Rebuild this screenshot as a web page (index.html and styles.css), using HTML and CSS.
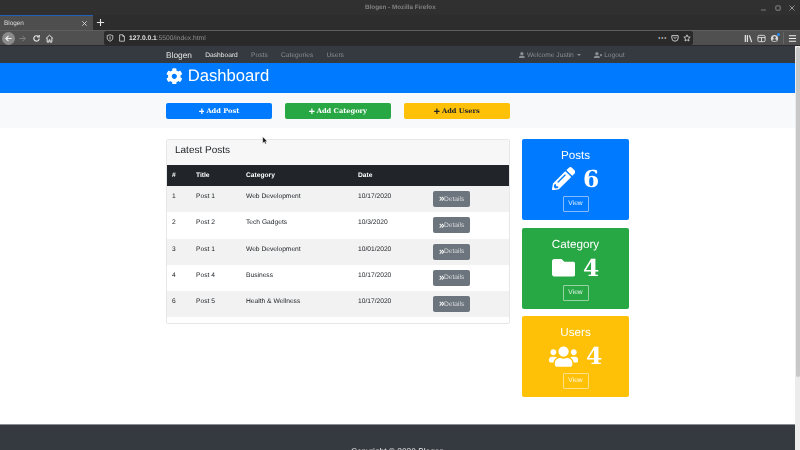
FILE: index.html
```html
<!DOCTYPE html>
<html lang="en">
<head>
<meta charset="utf-8">
<title>Blogen</title>
<link rel="stylesheet" href="styles.css">
</head>
<body>
<svg class="defs" aria-hidden="true">
  <symbol id="i-cog" viewBox="0 0 512 512"><path d="M487.4 315.7l-42.6-24.6c4.3-23.2 4.3-47 0-70.2l42.6-24.6c4.9-2.8 7.1-8.6 5.5-14-11.1-35.6-30-67.8-54.7-94.6-3.8-4.1-10-5.1-14.8-2.3L380.8 110c-17.9-15.4-38.5-27.3-60.8-35.1V25.8c0-5.6-3.9-10.5-9.4-11.7-36.7-8.2-74.3-7.8-109.2 0-5.5 1.2-9.4 6.1-9.4 11.7V75c-22.2 7.9-42.8 19.8-60.8 35.1L88.7 85.5c-4.9-2.8-11-1.9-14.8 2.3-24.7 26.7-43.6 58.9-54.7 94.6-1.7 5.4.6 11.2 5.5 14L67.3 221c-4.3 23.2-4.3 47 0 70.2l-42.6 24.6c-4.9 2.8-7.1 8.6-5.5 14 11.1 35.6 30 67.8 54.7 94.6 3.8 4.1 10 5.1 14.8 2.3l42.6-24.6c17.9 15.4 38.5 27.3 60.8 35.1v49.2c0 5.6 3.9 10.5 9.4 11.7 36.7 8.2 74.3 7.8 109.2 0 5.5-1.2 9.4-6.1 9.4-11.7v-49.2c22.2-7.9 42.8-19.8 60.8-35.1l42.6 24.6c4.9 2.8 11 1.9 14.8-2.3 24.7-26.7 43.6-58.9 54.7-94.6 1.5-5.5-.7-11.3-5.6-14.1zM256 336c-44.1 0-80-35.9-80-80s35.9-80 80-80 80 35.9 80 80-35.9 80-80 80z"/></symbol>
  <symbol id="i-pencil" viewBox="0 0 512 512"><path d="M497.9 142.1l-46.1 46.1c-4.7 4.7-12.3 4.7-17 0l-111-111c-4.7-4.7-4.7-12.3 0-17l46.1-46.1c18.7-18.7 49.1-18.7 67.9 0l60.1 60.1c18.8 18.7 18.8 49.1 0 67.9zM284.2 99.8L21.6 362.4.4 483.9c-2.9 16.4 11.4 30.6 27.8 27.8l121.5-21.3 262.6-262.6c4.7-4.7 4.7-12.3 0-17l-111-111c-4.8-4.7-12.4-4.7-17.1 0zM124.1 339.9c-5.5-5.5-5.5-14.3 0-19.8l154-154c5.5-5.5 14.3-5.5 19.8 0s5.5 14.3 0 19.8l-154 154c-5.5 5.5-14.3 5.5-19.8 0zM88 424h48v36.3l-64.5 11.3-31.1-31.1L51.7 376H88v48z"/></symbol>
  <symbol id="i-folder" viewBox="0 0 512 512"><path d="M464 128H272l-64-64H48C21.49 64 0 85.49 0 112v288c0 26.51 21.49 48 48 48h416c26.51 0 48-21.49 48-48V176c0-26.51-21.49-48-48-48z"/></symbol>
  <symbol id="i-users" viewBox="0 0 640 512"><path d="M96 224c35.3 0 64-28.7 64-64s-28.7-64-64-64-64 28.7-64 64 28.7 64 64 64zm448 0c35.3 0 64-28.7 64-64s-28.7-64-64-64-64 28.7-64 64 28.7 64 64 64zm32 32h-64c-17.6 0-33.5 7.1-45.1 18.6 40.3 22.1 68.9 62 75.1 109.4h66c17.7 0 32-14.3 32-32v-32c0-35.3-28.7-64-64-64zm-256 0c61.9 0 112-50.1 112-112S381.9 32 320 32 208 82.1 208 144s50.1 112 112 112zm76.8 32h-8.3c-20.8 10-43.9 16-68.5 16s-47.6-6-68.5-16h-8.3C179.6 288 128 339.6 128 403.2V432c0 26.5 21.5 48 48 48h288c26.5 0 48-21.5 48-48v-28.8c0-63.6-51.6-115.2-115.2-115.2zm-223.7-13.4C161.5 263.1 145.6 256 128 256H64c-35.3 0-64 28.7-64 64v32c0 17.7 14.3 32 32 32h65.9c6.3-47.4 34.9-87.3 75.2-109.4z"/></symbol>
  <symbol id="i-plus" viewBox="0 0 448 512"><path d="M416 208H272V64c0-17.67-14.33-32-32-32h-32c-17.67 0-32 14.33-32 32v144H32c-17.67 0-32 14.33-32 32v32c0 17.67 14.33 32 32 32h144v144c0 17.67 14.33 32 32 32h32c17.67 0 32-14.33 32-32V304h144c17.67 0 32-14.33 32-32v-32c0-17.67-14.33-32-32-32z"/></symbol>
  <symbol id="i-user" viewBox="0 0 448 512"><path d="M224 256c70.7 0 128-57.3 128-128S294.7 0 224 0 96 57.3 96 128s57.3 128 128 128zm89.6 32h-16.7c-22.2 10.2-46.9 16-72.9 16s-50.6-5.8-72.9-16h-16.7C60.2 288 0 348.2 0 422.4V464c0 26.5 21.5 48 48 48h352c26.5 0 48-21.5 48-48v-41.6c0-74.2-60.2-134.4-134.4-134.4z"/></symbol>
  <symbol id="i-logout" viewBox="0 0 640 512"><path d="M589.6 240l45.6-45.6c6.3-6.3 6.3-16.5 0-22.8l-22.8-22.8c-6.3-6.3-16.5-6.3-22.8 0L544 194.4l-45.6-45.6c-6.3-6.3-16.5-6.3-22.8 0l-22.8 22.8c-6.3 6.3-6.3 16.5 0 22.8l45.6 45.6-45.6 45.6c-6.3 6.3-6.3 16.5 0 22.8l22.8 22.8c6.3 6.3 16.5 6.3 22.8 0l45.6-45.6 45.6 45.6c6.3 6.3 16.5 6.3 22.8 0l22.8-22.8c6.3-6.3 6.3-16.5 0-22.8L589.6 240zM224 256c70.7 0 128-57.3 128-128S294.7 0 224 0 96 57.3 96 128s57.3 128 128 128zm89.6 32h-16.7c-22.2 10.2-46.9 16-72.9 16s-50.6-5.8-72.9-16h-16.7C60.2 288 0 348.2 0 422.4V464c0 26.5 21.5 48 48 48h352c26.5 0 48-21.5 48-48v-41.6c0-74.2-60.2-134.4-134.4-134.4z"/></symbol>
  <symbol id="i-dbl" viewBox="0 0 12 12"><path d="M1.5 2l4 4-4 4M6.5 2l4 4-4 4" fill="none" stroke="currentColor" stroke-width="2.2"/></symbol>
</svg>

<div class="window">
  <header class="titlebar">
    <span class="win-title">Blogen - Mozilla Firefox</span>
    <div class="win-controls">
      <svg class="win-ctl" viewBox="0 0 8 8"><path d="M1 6h5" stroke="#7a7a7a" fill="none"/></svg>
      <svg class="win-ctl" viewBox="0 0 8 8"><circle cx="4" cy="4" r="2.4" stroke="#6e6e6e" stroke-width="1.4" fill="none"/></svg>
      <svg class="win-ctl" viewBox="0 0 8 8"><path d="M1.5 1.5l5 5M6.5 1.5l-5 5" stroke="#8e8e8e" fill="none"/></svg>
    </div>
  </header>
  <div class="tabbar">
    <div class="tab"><span class="tab-name">Blogen</span>
      <svg class="tab-x" viewBox="0 0 8 8"><path d="M1.5 1.5l5 5M6.5 1.5l-5 5" stroke="#d8d8d8" fill="none"/></svg>
    </div>
    <svg class="new-tab" viewBox="0 0 10 10"><path d="M5 1v8M1 5h8" stroke="#e8e8e8" stroke-width="1.2" fill="none"/></svg>
  </div>
  <div class="toolbar">
    <span class="back"><svg viewBox="0 0 10 10"><path d="M8.5 5H2M5 2L2 5l3 3" stroke="#f0f0f0" stroke-width="1.2" fill="none"/></svg></span>
    <svg class="tool" viewBox="0 0 10 10"><path d="M1.5 5H8M5 2l3 3-3 3" stroke="#808080" stroke-width="1.1" fill="none"/></svg>
    <svg class="tool" viewBox="0 0 10 10"><path d="M8 5a3 3 0 1 1-1-2.3M8 1v2.3H5.7" stroke="#e8e8e8" stroke-width="1.3" fill="none"/></svg>
    <svg class="tool" viewBox="0 0 10 10"><path d="M1 5l4-3.6L9 5M2.4 4.6V9h2V6.5h1.2V9h2V4.6" stroke="#e8e8e8" stroke-width="1.1" fill="none"/></svg>
    <div class="urlbar">
      <svg class="url-ico" viewBox="0 0 10 10"><path d="M5 1l3.5 1v3c0 2-1.5 3.2-3.5 4C3 8.2 1.5 7 1.5 5V2zM5 3v4" stroke="#c8c8c8" stroke-width="1.1" fill="none"/></svg>
      <svg class="url-ico" viewBox="0 0 10 10"><path d="M2 1h4l2 2v6H2zM6 1v2h2" stroke="#d8d8d8" fill="none"/></svg>
      <span class="url"><b>127.0.0.1</b>:5500/index.html</span>
      <span class="url-dots">···</span>
      <svg class="url-ico" viewBox="0 0 10 10"><path d="M1 2h8v3a4 4 0 0 1-8 0zM3 4l2 1.5L7 4" stroke="#d8d8d8" stroke-width="1.1" fill="none"/></svg>
      <svg class="url-ico" viewBox="0 0 10 10"><path d="M5 1l1.2 2.7 2.8.3-2.1 1.9.6 2.9L5 7.3 2.5 8.8l.6-2.9L1 4l2.8-.3z" stroke="#e0e0e0" fill="none"/></svg>
    </div>
    <div class="tool-right">
      <svg class="tool" viewBox="0 0 10 10"><path d="M1.5 1v8M3.8 1v8M6 1.5l2.5 7.5" stroke="#e0e0e0" stroke-width="1.4" fill="none"/></svg>
      <svg class="tool" viewBox="0 0 10 10"><rect x="1" y="1.5" width="8" height="7" rx="1.5" stroke="#e0e0e0" fill="none"/><path d="M1 4h8M5 4v4.5" stroke="#e0e0e0" fill="none"/></svg>
      <span class="account"><svg class="tool" viewBox="0 0 10 10"><circle cx="5" cy="5" r="4" fill="#d8d8d8"/><circle cx="5" cy="4" r="1.5" fill="#555"/><path d="M2.5 8a2.5 2.5 0 0 1 5 0" fill="#555"/></svg><i class="badge"></i></span>
      <span class="tool-sep"></span>
      <svg class="tool" viewBox="0 0 10 10"><path d="M1 2h8M1 5h8M1 8h8" stroke="#f0f0f0" stroke-width="1.2" fill="none"/></svg>
    </div>
  </div>

  <div class="viewport">
    <div class="page">
      <nav class="navbar">
        <div class="container nav-inner">
          <span class="brand">Blogen</span>
          <a class="nav-link active">Dashboard</a>
          <a class="nav-link">Posts</a>
          <a class="nav-link">Categories</a>
          <a class="nav-link">Users</a>
          <a class="nav-link push"><svg class="nav-ico"><use href="#i-user"/></svg>Welcome Justin<i class="caret"></i></a>
          <a class="nav-link logout"><svg class="nav-ico wide"><use href="#i-logout"/></svg>Logout</a>
        </div>
      </nav>
      <section class="hero">
        <div class="container">
          <h1 class="hero-title"><svg class="hero-ico"><use href="#i-cog"/></svg>Dashboard</h1>
        </div>
      </section>
      <section class="actions">
        <div class="container actions-inner">
          <button class="act act-blue"><svg class="act-ico"><use href="#i-plus"/></svg>Add Post</button>
          <button class="act act-green"><svg class="act-ico"><use href="#i-plus"/></svg>Add Category</button>
          <button class="act act-yellow"><svg class="act-ico"><use href="#i-plus"/></svg>Add Users</button>
        </div>
      </section>
      <main class="container main">
        <section class="card">
          <h2 class="card-head">Latest Posts</h2>
          <table class="table">
            <thead>
              <tr><th>#</th><th>Title</th><th>Category</th><th>Date</th><th></th></tr>
            </thead>
            <tbody>
              <tr><td>1</td><td>Post 1</td><td>Web Development</td><td>10/17/2020</td><td><button class="details"><svg class="dbl"><use href="#i-dbl"/></svg>Details</button></td></tr>
              <tr><td>2</td><td>Post 2</td><td>Tech Gadgets</td><td>10/3/2020</td><td><button class="details"><svg class="dbl"><use href="#i-dbl"/></svg>Details</button></td></tr>
              <tr><td>3</td><td>Post 1</td><td>Web Development</td><td>10/01/2020</td><td><button class="details"><svg class="dbl"><use href="#i-dbl"/></svg>Details</button></td></tr>
              <tr><td>4</td><td>Post 4</td><td>Business</td><td>10/17/2020</td><td><button class="details"><svg class="dbl"><use href="#i-dbl"/></svg>Details</button></td></tr>
              <tr><td>6</td><td>Post 5</td><td>Health &amp; Wellness</td><td>10/17/2020</td><td><button class="details"><svg class="dbl"><use href="#i-dbl"/></svg>Details</button></td></tr>
            </tbody>
          </table>
        </section>
        <aside class="stats">
          <div class="stat stat-blue">
            <h3 class="stat-title">Posts</h3>
            <div class="stat-value"><svg class="stat-ico"><use href="#i-pencil"/></svg>6</div>
            <a class="view">View</a>
          </div>
          <div class="stat stat-green">
            <h3 class="stat-title">Category</h3>
            <div class="stat-value"><svg class="stat-ico"><use href="#i-folder"/></svg>4</div>
            <a class="view">View</a>
          </div>
          <div class="stat stat-yellow">
            <h3 class="stat-title">Users</h3>
            <div class="stat-value"><svg class="stat-ico users"><use href="#i-users"/></svg>4</div>
            <a class="view">View</a>
          </div>
        </aside>
      </main>
      <footer class="footer">Copyright © 2020 Blogen</footer>
    </div>
    <div class="scrollbar"><span class="thumb"></span></div>
  </div>
</div>

<svg class="cursor" viewBox="0 0 8 12"><path d="M1 1v8.5l2-1.8 1.3 3 1.4-.6-1.3-2.900H7z" fill="#111" stroke="#fff" stroke-width=".5"/></svg>
</body>
</html>
```

FILE: styles.css
```css
* { box-sizing: border-box; }
html, body { margin: 0; padding: 0; height: 100%; overflow: hidden; }
body { font-family: "Liberation Sans", Arial, sans-serif; background: #fff; color: #212529; position: relative; text-rendering: geometricPrecision; }
.defs { display: none; }
svg { fill: currentColor; display: block; }

.window { width: 800px; height: 450px; display: flex; flex-direction: column; overflow: hidden; filter: blur(.3px); }
.container { width: 463px; margin: 0 auto; }

/* browser chrome */
.titlebar { height: 15px; background: #303030; display: flex; align-items: center; justify-content: center; position: relative; flex: none; }
.win-title { font-size: 6.3px; font-weight: bold; color: #808080; will-change: transform; }
.win-controls { position: absolute; right: 4px; top: 4px; display: flex; gap: 6px; }
.win-ctl { width: 8px; height: 8px; }

.tabbar { height: 15px; background: #2d2d2d; display: flex; align-items: center; flex: none; }
.tab { width: 93px; height: 15px; background: #4e4e4e; border-top: 1px solid #1d62b8; display: flex; align-items: center; justify-content: space-between; padding: 0 5px 0 4px; }
.tab-name { font-size: 6.4px; color: #dcdcdc; will-change: transform; }
.tab-x { width: 7px; height: 7px; }
.new-tab { width: 9px; height: 9px; margin-left: 3px; }

.toolbar { height: 16px; background: #505050; border-bottom: 1px solid #2a2a2a; border-top: 1px solid #5e5e5e; display: flex; align-items: center; padding-left: 2px; flex: none; }
.back { width: 13px; height: 13px; border-radius: 50%; background: #8a8a8a; display: flex; align-items: center; justify-content: center; margin-right: 3px; flex: none; }
.back svg { width: 9px; height: 9px; }
.tool { width: 9px; height: 9px; margin-right: 4.5px; flex: none; }
.urlbar { height: 14px; width: 589px; margin-left: 45.5px; background: #2a2a2a; border-radius: 2px; display: flex; align-items: center; padding: 0 2px; gap: 4px; flex: none; }
.url-ico { width: 8px; height: 8px; flex: none; }
.url { font-size: 6.67px; color: #8e8e8e; flex: 1; margin-left: -1px; will-change: transform; }
.url b { color: #e0e0e0; }
.url-dots { font-size: 9px; font-weight: bold; color: #e0e0e0; line-height: 8px; }
.tool-right { display: flex; align-items: center; margin-left: auto; padding-right: 3.5px; }
.tool-right .tool { margin-right: 4px; }
.tool-right > .tool:last-child { margin-right: 0; }
.account { position: relative; display: block; }
.badge { position: absolute; right: 3px; top: -1px; width: 3px; height: 3px; background: #2a90ff; border-radius: 50%; }
.tool-sep { width: 1px; height: 12px; background: #666; margin: 0 3.5px 0 0; }

.viewport { flex: 1; display: flex; min-height: 0; overflow: hidden; }
.page { flex: 1; min-width: 0; display: flex; flex-direction: column; will-change: transform; }
.scrollbar { width: 5px; background: #ececec; padding: 1px 0 0 1px; flex: none; }
.thumb { display: block; height: 330px; background: #c8c8c8; border-radius: 2px; }

/* navbar */
.navbar { height: 17px; background: #343a40; flex: none; }
.nav-inner { height: 100%; display: flex; align-items: center; padding-top: 1px; }
.brand { font-size: 8.33px; color: #e4e4e4; margin-right: 13.3px; }
.nav-link { font-size: 6.67px; color: #8a8e92; margin-right: 13.3px; display: flex; align-items: center; white-space: nowrap; }
.nav-link.active { color: #e8e8e8; }
.nav-link.push { margin-left: auto; }
.nav-link.logout { margin-right: 4.5px; }
.nav-ico { width: 5.8px; height: 6.67px; margin-right: 2px; }
.nav-ico.wide { width: 8.3px; margin-right: 1.5px; }
.caret { width: 0; height: 0; border-left: 2px solid transparent; border-right: 2px solid transparent; border-top: 2px solid #8a8e92; margin-left: 3.3px; }

/* hero */
.hero { height: 30px; background: #007bff; flex: none; padding-bottom: 4px; display: flex; align-items: center; }
.hero-title { margin: 0; font-size: 16.67px; font-weight: 400; color: #fff; display: flex; align-items: center; }
.hero-ico { width: 16.67px; height: 16.67px; margin-right: 5px; }

/* actions */
.actions { height: 35px; background: #f8f9fa; flex: none; padding-top: 10px; }
.actions-inner { display: flex; gap: 13px; }
.act { width: 106px; height: 16px; border: 0; border-radius: 2px; padding: 0; font: bold 6.67px "DejaVu Serif", serif; display: flex; align-items: center; justify-content: center; color: #fff; text-rendering: geometricPrecision; }
.act-ico { width: 5.8px; height: 6.67px; margin-right: 2px; }
.act-blue { background: #007bff; }
.act-green { background: #28a745; }
.act-yellow { background: #ffc107; color: #212529; }

/* main */
.main { height: 296px; flex: none; display: flex; align-items: flex-start; gap: 12px; padding-top: 11px; }
.card { width: 344px; height: 185px; background: #fff; border: 1px solid #e6e7e8; border-radius: 2px; flex: none; }
.card-head { margin: 0; height: 25px; background: #f7f7f7; padding-left: 8px; font-size: 10px; font-weight: 400; line-height: 21px; color: #212529; }
.table { width: 100%; border-collapse: collapse; table-layout: fixed; font-size: 6.67px; }
.table th { height: 21px; background: #212529; color: #fff; font-weight: bold; text-align: left; padding: 0 0 0 5px; }
.table th:nth-child(1) { width: 24px; }
.table th:nth-child(2) { width: 50px; }
.table th:nth-child(3) { width: 112px; }
.table th:nth-child(4) { width: 75px; }
.table td { height: 26.3px; padding: 6px 0 0 5px; vertical-align: top; line-height: 10px; color: #212529; }
.table tbody tr:nth-child(odd) td { background: #f2f2f2; }
.table td:last-child { padding-top: 5px; }
.details { width: 37px; height: 16px; background: #6c757d; color: #d8dbde; border: 0; border-radius: 2px; padding: 0 0 0 5.5px; font: 6.67px "Liberation Sans", Arial, sans-serif; display: flex; align-items: center; text-rendering: geometricPrecision; }
.dbl { width: 5.5px; height: 5.5px; color: #fff; }

/* stats */
.stats { width: 107px; display: flex; flex-direction: column; gap: 7.7px; flex: none; }
.stat { height: 81px; border-radius: 2px; color: #fff; text-align: center; padding-top: 10px; display: flex; flex-direction: column; align-items: center; }
.stat-blue { background: #007bff; }
.stat-green { background: #28a745; }
.stat-yellow { background: #ffc107; }
.stat-title { margin: 0; font-size: 11.67px; font-weight: 400; line-height: 14px; }
.stat-value { font: bold 23.33px/30px "DejaVu Serif", serif; height: 30px; display: flex; align-items: center; justify-content: center; margin-top: 1px; }
.stat-ico { height: 23.33px; width: 23.33px; margin-right: 8px; }
.stat-ico.users { width: 29.2px; }
.view { margin-top: 2px; width: 26px; height: 16px; border: 1px solid rgba(255,255,255,.5); border-radius: 1px; font-size: 6.67px; line-height: 14px; color: rgba(255,255,255,.9); }

/* footer */
.footer { flex: 1; background: #343a40; border-top: 1px solid #8b8d90; color: #eee; font-size: 8.33px; line-height: 14px; text-align: center; padding-top: 19px; overflow: hidden; min-height: 0; }

.cursor { position: absolute; left: 262px; top: 136px; width: 6px; height: 9px; }
```
